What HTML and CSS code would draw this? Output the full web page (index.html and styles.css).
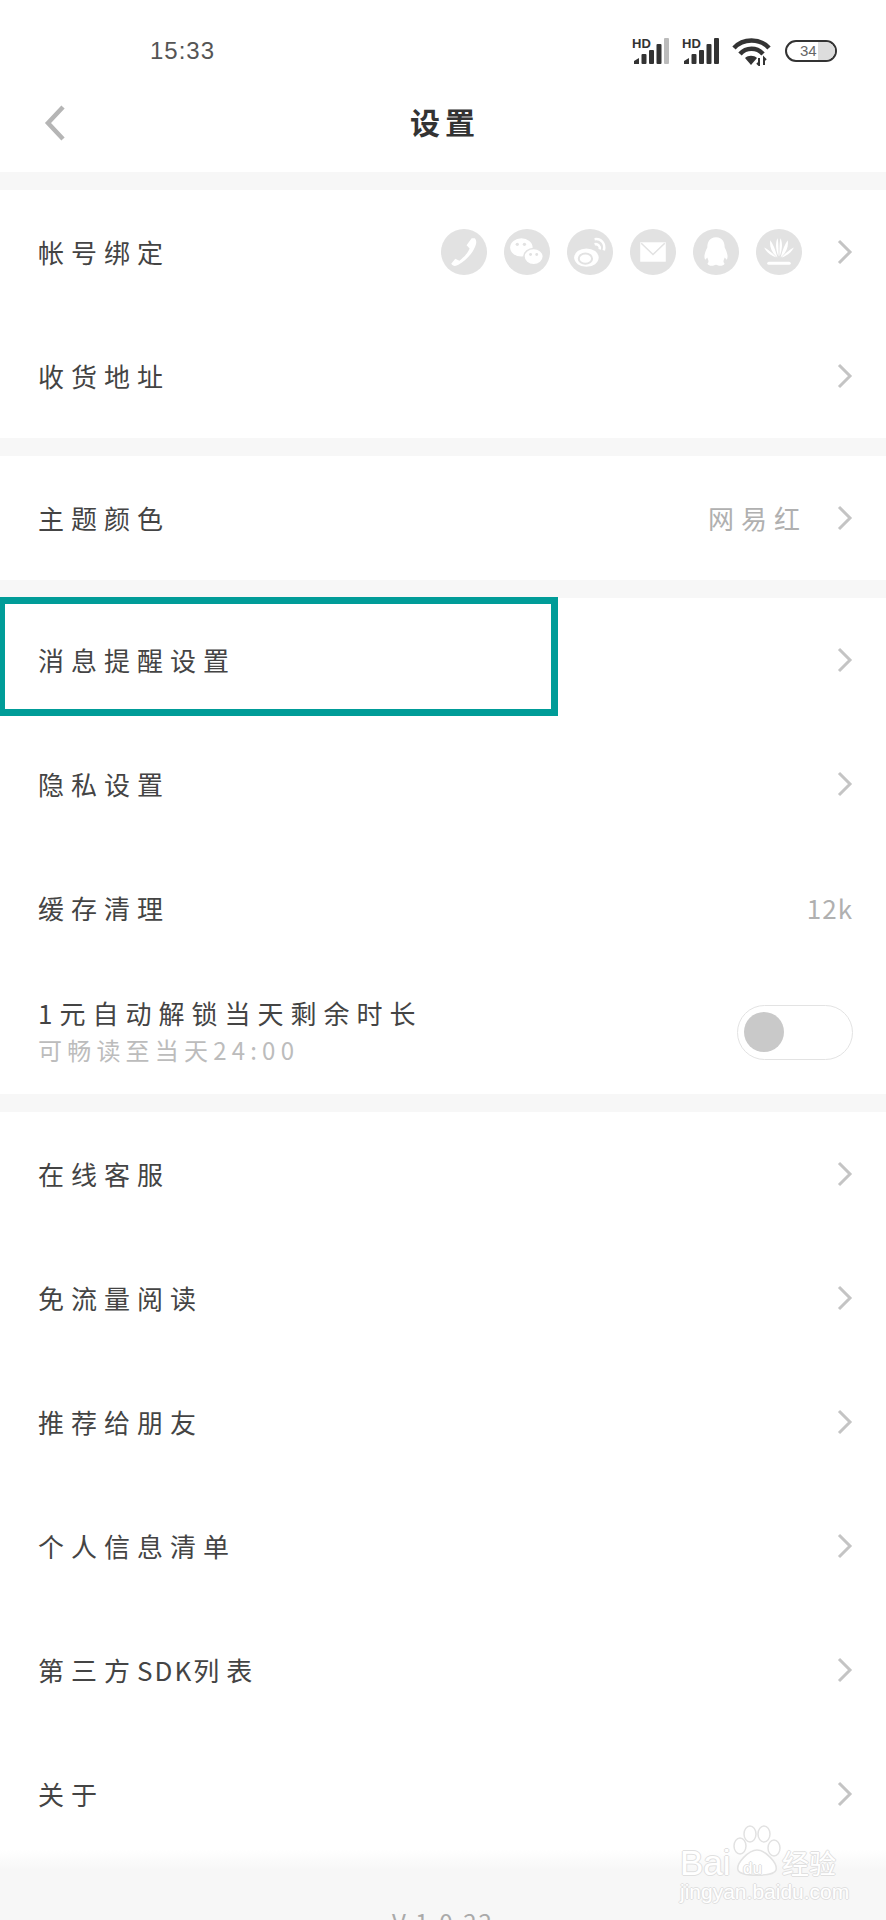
FILE: index.html
```html
<!DOCTYPE html>
<html lang="zh-CN">
<head>
  <meta charset="UTF-8" />
  <meta name="viewport" content="width=device-width, initial-scale=1" />
  <title>设置</title>
  <link rel="stylesheet" href="styles.css">
</head>
<body>
  <div class="page">
    <div class="statusbar">
      <span class="time">15:33</span>
      <div class="status-icons">
        <div class="signal">
          <span class="hd">HD</span>
          <svg width="40" height="26" viewBox="0 0 40 26"><g fill="#333"><path d="M2 26 V23 L7 20 V26 Z"/><rect x="9.5" y="16" width="5" height="10" rx="1"/><rect x="17" y="12" width="5" height="14" rx="1"/><rect x="24.5" y="6" width="5" height="20" rx="1"/></g><rect x="32" y="0" width="5" height="26" rx="1" fill="#bbb"/></svg>
        </div>
        <div class="signal">
          <span class="hd">HD</span>
          <svg width="40" height="26" viewBox="0 0 40 26"><g fill="#333"><path d="M2 26 V23 L7 20 V26 Z"/><rect x="9.5" y="16" width="5" height="10" rx="1"/><rect x="17" y="12" width="5" height="14" rx="1"/><rect x="24.5" y="6" width="5" height="20" rx="1"/><rect x="32" y="0" width="5" height="26" rx="1"/></g></svg>
        </div>
        <svg class="wifi" width="39" height="28" viewBox="0 0 39 28"><g fill="none" stroke="#333" stroke-width="4.5"><path d="M2 10 C11 0 28 0 37 10"/><path d="M8 16 C14 9 25 9 31 16"/></g><path d="M13 20 C16 17 22 17 25 20 L19 27 Z" fill="#333"/><path d="M27 20v7l-2-2M32 27v-7l2 2" fill="none" stroke="#333" stroke-width="2"/></svg>
        <div class="battery"><span class="battery-level"></span><span class="battery-num">34</span></div>
      </div>
    </div>

    <header class="navbar">
      <svg class="back" width="24" height="38" viewBox="0 0 24 38"><path d="M20 3 L5 19 L20 35" fill="none" stroke="#b5b5b5" stroke-width="4.5"/></svg>
      <h1>设置</h1>
    </header>

    <div class="band"></div>

    <section class="group">
      <div class="row">
        <span class="label">帐号绑定</span>
        <div class="accounts">
          <svg class="acc" viewBox="0 0 45 45"><circle cx="22.5" cy="22.5" r="22.5"/><path d="M33 9 C35 11 35 14 33 18 C30 25 24 31 17 35 C14 37 11 36 10 34 L14 29 L18 31 C22 28 26 24 28 19 L25 16 L30 9 Z" fill="#fff"/></svg>
          <svg class="acc" viewBox="0 0 45 45"><circle cx="22.5" cy="22.5" r="22.5"/><ellipse cx="17" cy="18" rx="11" ry="9" fill="#fff"/><ellipse cx="29" cy="27" rx="9.5" ry="8" fill="#fff" stroke="#e2e2e2" stroke-width="1.5"/><circle cx="13" cy="15" r="1.6"/><circle cx="20" cy="15" r="1.6"/><circle cx="26" cy="25" r="1.4"/><circle cx="32" cy="25" r="1.4"/></svg>
          <svg class="acc" viewBox="0 0 45 45"><circle cx="22.5" cy="22.5" r="22.5"/><ellipse cx="19" cy="28" rx="12" ry="9" fill="#fff"/><ellipse cx="18" cy="29" rx="6.5" ry="5" fill="none" stroke="#e2e2e2" stroke-width="2"/><path d="M27 10 C33 9 38 14 36 21 M27 15 C30 14 33 17 32 20" fill="none" stroke="#fff" stroke-width="2.5"/></svg>
          <svg class="acc" viewBox="0 0 45 45"><circle cx="22.5" cy="22.5" r="22.5"/><rect x="10" y="13" width="25" height="19" fill="#fff"/><path d="M11 14 L22.5 25 L34 14" fill="none" stroke="#e2e2e2" stroke-width="1.5"/></svg>
          <svg class="acc" viewBox="0 0 45 45"><circle cx="22.5" cy="22.5" r="22.5"/><path d="M22.5 8 C29 8 31 13 31 18 C33 22 35 27 33 30 L31 28 C30 31 29 32 31 34 C29 37 25 36 22.5 35 C20 36 16 37 14 34 C16 32 15 31 14 28 L12 30 C10 27 12 22 14 18 C14 13 16 8 22.5 8 Z" fill="#fff"/></svg>
          <svg class="acc" viewBox="0 0 45 45"><circle cx="22.5" cy="22.5" r="22.5"/><g fill="#fff"><path d="M22 27 C19 20 19 13 21 9 C22 12 22 20 22 27 Z"/><path d="M23 27 C26 20 26 13 24 9 C23 12 23 20 23 27 Z"/><path d="M21 28 C15 23 13 17 14 11 C17 15 19 21 21 28 Z"/><path d="M24 28 C30 23 32 17 31 11 C28 15 26 21 24 28 Z"/><path d="M20 28 C14 26 10 22 8 18 C12 20 17 24 20 28 Z"/><path d="M25 28 C31 26 35 22 37 18 C33 20 28 24 25 28 Z"/><rect x="11" y="32" width="23" height="3" rx="1.5"/></g></svg>
        </div>
        <svg class="chevron" viewBox="0 0 16 26"><path d="M2 2 L13 13 L2 24"/></svg>
      </div>
      <div class="row">
        <span class="label">收货地址</span>
        <svg class="chevron" viewBox="0 0 16 26"><path d="M2 2 L13 13 L2 24"/></svg>
      </div>
    </section>

    <div class="band"></div>

    <section class="group">
      <div class="row">
        <span class="label">主题颜色</span>
        <span class="value">网易红</span>
        <svg class="chevron" viewBox="0 0 16 26"><path d="M2 2 L13 13 L2 24"/></svg>
      </div>
    </section>

    <div class="band"></div>

    <section class="group">
      <div class="row">
        <span class="label">消息提醒设置</span>
        <svg class="chevron" viewBox="0 0 16 26"><path d="M2 2 L13 13 L2 24"/></svg>
        <div class="highlight"></div>
      </div>
      <div class="row">
        <span class="label">隐私设置</span>
        <svg class="chevron" viewBox="0 0 16 26"><path d="M2 2 L13 13 L2 24"/></svg>
      </div>
      <div class="row">
        <span class="label">缓存清理</span>
        <span class="value value-end">12k</span>
      </div>
      <div class="row">
        <div class="label-stack">
          <span class="label">1元自动解锁当天剩余时长</span>
          <span class="sublabel">可畅读至当天24:00</span>
        </div>
        <div class="toggle"><span class="knob"></span></div>
      </div>
    </section>

    <div class="band"></div>

    <section class="group">
      <div class="row">
        <span class="label">在线客服</span>
        <svg class="chevron" viewBox="0 0 16 26"><path d="M2 2 L13 13 L2 24"/></svg>
      </div>
      <div class="row">
        <span class="label">免流量阅读</span>
        <svg class="chevron" viewBox="0 0 16 26"><path d="M2 2 L13 13 L2 24"/></svg>
      </div>
      <div class="row">
        <span class="label">推荐给朋友</span>
        <svg class="chevron" viewBox="0 0 16 26"><path d="M2 2 L13 13 L2 24"/></svg>
      </div>
      <div class="row">
        <span class="label">个人信息清单</span>
        <svg class="chevron" viewBox="0 0 16 26"><path d="M2 2 L13 13 L2 24"/></svg>
      </div>
      <div class="row">
        <span class="label">第三方<span class="latin">SDK</span>列表</span>
        <svg class="chevron" viewBox="0 0 16 26"><path d="M2 2 L13 13 L2 24"/></svg>
      </div>
      <div class="row">
        <span class="label">关于</span>
        <svg class="chevron" viewBox="0 0 16 26"><path d="M2 2 L13 13 L2 24"/></svg>
      </div>
    </section>

    <footer class="footer">
      <span class="version">V 1.0.22</span>
      <div class="watermark">
        <svg class="paw" width="48" height="52" viewBox="0 0 48 52"><g fill="#fff" stroke="#e2e2e2" stroke-width="1.5"><ellipse cx="17" cy="9" rx="6" ry="8"/><ellipse cx="31" cy="9" rx="6" ry="8"/><ellipse cx="7" cy="21" rx="6" ry="8"/><ellipse cx="41" cy="23" rx="6" ry="8"/><path d="M24 25 C32 25 45 38 43 45 C41 52 7 52 5 45 C3 38 16 25 24 25 Z"/></g></svg>
        <span class="wm-bai">Bai</span>
        <span class="wm-du">du</span>
        <span class="wm-cn">经验</span>
        <span class="wm-url">jingyan.baidu.com</span>
      </div>
    </footer>
  </div>
</body>
</html>
```

FILE: styles.css
```css
html, body {
  margin: 0;
  padding: 0;
  background-color: #fff;
}

.page {
  width: 886px;
  height: 1920px;
  overflow: hidden;
  font-family: "Noto Sans CJK SC", "Noto Sans", sans-serif;
  color: #444;
  display: flex;
  flex-direction: column;
}

/* status bar */
.statusbar {
  height: 76px;
  flex: none;
  display: flex;
  justify-content: space-between;
  padding: 38px 49px 0 150px;
  box-sizing: border-box;
}

.time {
  margin-top: -2px;
  font-family: "Liberation Sans", sans-serif;
  font-size: 24px;
  line-height: 30px;
  letter-spacing: 1px;
  color: #555;
}

.status-icons {
  display: flex;
  align-items: flex-start;
  gap: 10px;
}

.signal {
  position: relative;
  width: 40px;
  height: 26px;
}

.signal svg {
  display: block;
}

.hd {
  position: absolute;
  left: 0;
  top: 0;
  font-family: "Liberation Sans", sans-serif;
  font-size: 13px;
  line-height: 11px;
  font-weight: bold;
  color: #333;
}

.wifi {
  margin-right: 4px;
}

.battery {
  position: relative;
  width: 52px;
  height: 22px;
  margin-top: 2px;
  border: 2px solid #333;
  border-radius: 11px;
  box-sizing: border-box;
  overflow: hidden;
  padding-left: 13px;
}

.battery-level {
  position: absolute;
  right: 0;
  top: 0;
  bottom: 0;
  width: 17px;
  background-color: #ddd;
}

.battery-num {
  position: relative;
  display: block;
  font-family: "Liberation Sans", sans-serif;
  font-size: 15px;
  line-height: 18px;
  color: #666;
}

/* nav */
.navbar {
  height: 96px;
  flex: none;
  position: relative;
  display: flex;
  align-items: center;
  justify-content: center;
}

.back {
  position: absolute;
  left: 43px;
  top: 28px;
}

.navbar h1 {
  margin: 0 0 6px 4px;
  font-size: 30px;
  line-height: 40px;
  font-weight: bold;
  letter-spacing: 5px;
  color: #333;
}

.band {
  height: 18px;
  flex: none;
  background-color: #f7f7f7;
}

.row {
  position: relative;
  height: 124px;
  display: flex;
  align-items: center;
  padding: 0 33px 0 38px;
  box-sizing: border-box;
}

.label {
  flex: none;
  font-size: 26px;
  line-height: 36px;
  letter-spacing: 7px;
  color: #444;
}

.latin {
  letter-spacing: 2px;
}

.value {
  margin-left: auto;
  font-size: 26px;
  line-height: 36px;
  letter-spacing: 7px;
  color: #b0b0b0;
}

.value-end {
  letter-spacing: 1px;
}

.chevron {
  width: 16px;
  height: 26px;
  flex: none;
  margin-left: auto;
  fill: none;
  stroke: #c4c4c4;
  stroke-width: 3;
}

.value + .chevron {
  margin-left: 30px;
}

.accounts + .chevron {
  margin-left: 35px;
}

.accounts {
  margin-left: auto;
  display: flex;
  gap: 17px;
}

.acc {
  width: 46px;
  height: 46px;
  display: block;
  fill: #e2e2e2;
}

.highlight {
  position: absolute;
  left: 0;
  top: -1px;
  width: 558px;
  height: 119px;
  border: 7px solid #009c98;
  border-left-width: 5px;
  box-sizing: border-box;
}

.label-stack {
  display: flex;
  flex-direction: column;
  margin-top: -3px;
}

.label-stack .label {
  line-height: 38px;
}

.sublabel {
  font-size: 24px;
  line-height: 36px;
  letter-spacing: 5.2px;
  color: #bcbcbc;
}

.toggle {
  margin-left: auto;
  width: 116px;
  height: 55px;
  border: 1px solid #e3e3e3;
  border-radius: 28px;
  box-sizing: border-box;
  display: flex;
  align-items: center;
  padding-left: 6px;
}

.knob {
  width: 40px;
  height: 40px;
  border-radius: 50%;
  background-color: #c9c9c9;
}

/* footer */
.footer {
  position: relative;
  flex: 1;
  margin-top: -6px;
  background: linear-gradient(#fff, #f7f7f7 20px);
  text-align: center;
  padding-top: 54px;
}

.version {
  font-size: 24px;
  line-height: 36px;
  letter-spacing: 2px;
  color: #aaa;
}

/* baidu watermark sits on top of the page */
.watermark {
  position: absolute;
  left: 680px;
  top: -25px;
  width: 160px;
  height: 80px;
  text-align: left;
  font-family: "Liberation Sans", sans-serif;
  color: #fff;
  text-shadow: 1px 0 0 #e0e0e0, -1px 0 0 #e0e0e0, 0 1px 0 #e0e0e0, 0 -1px 0 #e0e0e0;
}

.paw {
  position: absolute;
  left: 53px;
  top: 0;
}

.wm-bai {
  position: absolute;
  left: 0;
  top: 18px;
  font-size: 35px;
  line-height: 40px;
}

.wm-du {
  position: absolute;
  left: 63px;
  top: 34px;
  font-size: 17px;
  line-height: 20px;
}

.wm-cn {
  position: absolute;
  left: 102px;
  top: 20px;
  font-family: "Noto Sans CJK SC", sans-serif;
  font-size: 27px;
  line-height: 36px;
}

.wm-url {
  position: absolute;
  left: 0;
  top: 55px;
  font-size: 21px;
  line-height: 24px;
}
```
